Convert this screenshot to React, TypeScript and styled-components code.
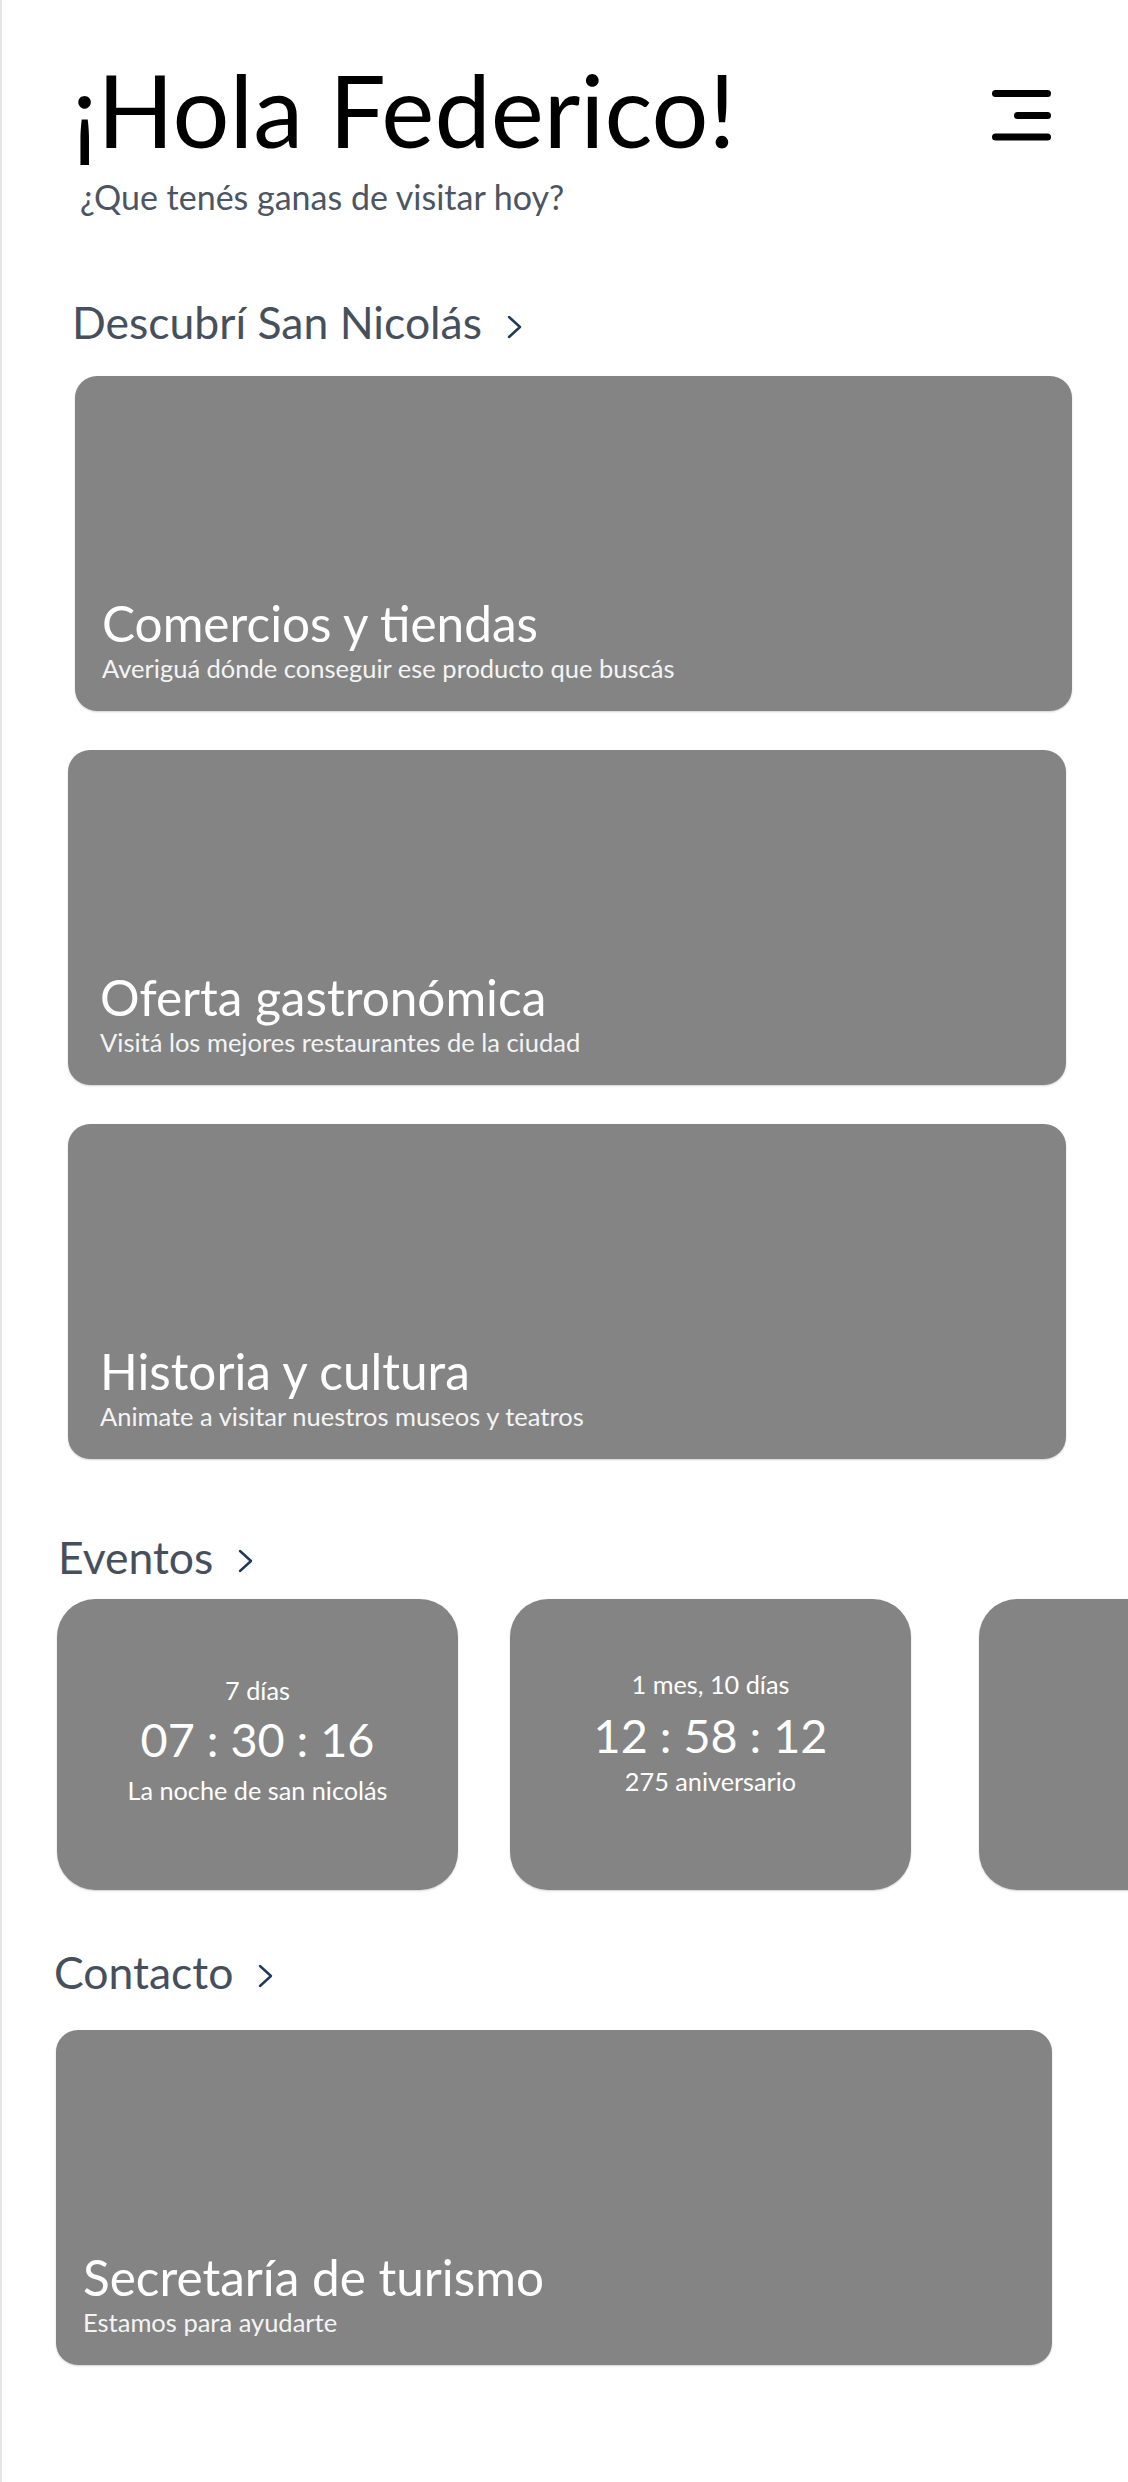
import React from "react";
import styled, { createGlobalStyle } from "styled-components";

const GlobalStyle = createGlobalStyle`
  html, body {
    margin: 0;
    padding: 0;
    background: #ffffff;
  }
  body {
    font-family: Lato, "Open Sans", "Liberation Sans", sans-serif;
  }
  * {
    box-sizing: border-box;
  }
`;

const Page = styled.div`
  width: 1128px;
  min-height: 2482px;
  border-left: 2px solid #e6e6e6;
  padding-top: 48.5px;
  overflow: hidden;
  background: #ffffff;
`;

const Header = styled.header`
  display: flex;
  justify-content: space-between;
  align-items: flex-start;
  padding: 0 77px 0 70px;
`;

const Greeting = styled.h1`
  margin: 0;
  font-size: 100.5px;
  font-weight: 400;
  line-height: 1.2;
  color: #000000;
`;

const Tagline = styled.p`
  margin: 8px 0 0 8px;
  font-size: 34px;
  line-height: 1.2;
  color: #4b5563;
`;

const MenuButton = styled.button`
  border: 0;
  background: none;
  padding: 0;
  margin-top: 41.5px;
  width: 59px;
  height: 51px;
  display: flex;
  cursor: pointer;
`;

const Section = styled.section<{ $indent: number; $top: number }>`
  padding-left: ${(p) => p.$indent}px;
  margin-top: ${(p) => p.$top}px;
`;

const SectionTitle = styled.h2`
  margin: 0;
  display: flex;
  align-items: center;
  gap: 25px;
  font-size: 44.5px;
  font-weight: 400;
  line-height: 1.2;
  color: #46505d;
`;

const ChevronIcon = styled.svg`
  flex: 0 0 auto;
  margin-top: 10px;
`;

const CardList = styled.div`
  display: flex;
  flex-direction: column;
  gap: 39px;
  margin-top: 28px;
`;

const Card = styled.article<{ $x: number; $pad: number; $width: number }>`
  margin-left: ${(p) => p.$x}px;
  width: ${(p) => p.$width}px;
  height: 335px;
  border-radius: 22px;
  background: #848484;
  box-shadow: 0 1px 2px rgba(0, 0, 0, 0.18);
  display: flex;
  flex-direction: column;
  justify-content: flex-end;
  padding: 0 24px 27.5px ${(p) => p.$pad}px;
  color: #ffffff;
`;

const CardTitle = styled.h3`
  margin: 0;
  font-size: 49.5px;
  font-weight: 400;
  line-height: 1.2;
`;

const CardText = styled.p`
  margin: 0;
  font-size: 25.5px;
  line-height: 1.2;
  color: #f4f4f4;
`;

const EventRow = styled.div`
  display: flex;
  gap: 52px;
  margin-top: 16px;
  margin-left: -1px;
`;

const EventCard = styled.article<{ $extra?: number; $lift: number }>`
  flex: 0 0 401px;
  height: 291px;
  margin-left: ${(p) => p.$extra ?? 0}px;
  border-radius: 38px;
  background: #848484;
  box-shadow: 0 1px 2px rgba(0, 0, 0, 0.18);
  display: flex;
  flex-direction: column;
  align-items: center;
  justify-content: center;
  padding-bottom: ${(p) => p.$lift}px;
  color: #ffffff;
`;

const EventWhen = styled.span`
  font-size: 25.25px;
  line-height: 1.2;
`;

const EventClock = styled.span<{ $above: number; $below: number }>`
  margin: ${(p) => p.$above}px 0 ${(p) => p.$below}px;
  font-size: 46.75px;
  line-height: 1.2;
`;

const EventName = styled.span`
  font-size: 25.25px;
  line-height: 1.2;
`;

const ContactWrap = styled.div`
  margin-top: 32px;
`;

const Chevron = () => (
  <ChevronIcon width="15" height="24" viewBox="0 0 15 24" aria-hidden="true">
    <polyline
      points="2,2 13,12 2,22"
      fill="none"
      stroke="#1e3a58"
      strokeWidth="2.4"
      strokeLinecap="round"
      strokeLinejoin="round"
    />
  </ChevronIcon>
);

const MenuIcon = () => (
  <svg width="59" height="51" viewBox="0 0 59 51" aria-hidden="true">
    <g stroke="#000" strokeWidth="7" strokeLinecap="round">
      <line x1="3.5" y1="3.5" x2="55.5" y2="3.5" />
      <line x1="25.5" y1="25.5" x2="55.5" y2="25.5" />
      <line x1="3.5" y1="47" x2="55.5" y2="47" />
    </g>
  </svg>
);

const places = [
  {
    title: "Comercios y tiendas",
    text: "Averiguá dónde conseguir ese producto que buscás",
    x: 3,
    pad: 27,
    width: 997,
  },
  {
    title: "Oferta gastronómica",
    text: "Visitá los mejores restaurantes de la ciudad",
    x: -4,
    pad: 32,
    width: 998,
  },
  {
    title: "Historia y cultura",
    text: "Animate a visitar nuestros museos y teatros",
    x: -4,
    pad: 32,
    width: 998,
  },
];

const events = [
  {
    when: "7 días",
    clock: "07 : 30 : 16",
    name: "La noche de san nicolás",
    extra: 0,
    above: 5,
    below: 8,
    lift: 9,
  },
  {
    when: "1 mes, 10 días",
    clock: "12 : 58 : 12",
    name: "275 aniversario",
    extra: 0,
    above: 7.5,
    below: 3,
    lift: 24,
  },
  { when: "", clock: "", name: "", extra: 16, above: 0, below: 0, lift: 0 },
];

export default function App() {
  return (
    <>
      <GlobalStyle />
      <Page>
        <Header>
          <div>
            <Greeting>¡Hola Federico!</Greeting>
            <Tagline>¿Que tenés ganas de visitar hoy?</Tagline>
          </div>
          <MenuButton aria-label="Menú">
            <MenuIcon />
          </MenuButton>
        </Header>

        <Section $indent={70} $top={77}>
          <SectionTitle>
            Descubrí San Nicolás
            <Chevron />
          </SectionTitle>
          <CardList>
            {places.map((p) => (
              <Card key={p.title} $x={p.x} $pad={p.pad} $width={p.width}>
                <CardTitle>{p.title}</CardTitle>
                <CardText>{p.text}</CardText>
              </Card>
            ))}
          </CardList>
        </Section>

        <Section $indent={56} $top={70.5}>
          <SectionTitle>
            Eventos
            <Chevron />
          </SectionTitle>
          <EventRow>
            {events.map((e, i) => (
              <EventCard key={i} $extra={e.extra} $lift={e.lift}>
                {e.when && <EventWhen>{e.when}</EventWhen>}
                {e.clock && (
                  <EventClock $above={e.above} $below={e.below}>
                    {e.clock}
                  </EventClock>
                )}
                {e.name && <EventName>{e.name}</EventName>}
              </EventCard>
            ))}
          </EventRow>
        </Section>

        <Section $indent={52} $top={54.5}>
          <SectionTitle>
            Contacto
            <Chevron />
          </SectionTitle>
          <ContactWrap>
            <Card $x={2} $pad={27} $width={996}>
              <CardTitle>Secretaría de turismo</CardTitle>
              <CardText>Estamos para ayudarte</CardText>
            </Card>
          </ContactWrap>
        </Section>
      </Page>
    </>
  );
}
